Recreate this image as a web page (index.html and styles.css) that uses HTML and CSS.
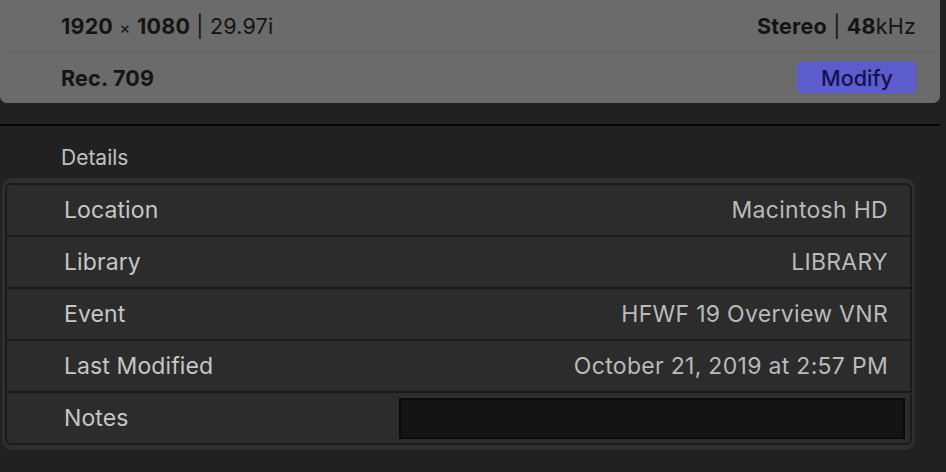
FILE: index.html
```html
<!DOCTYPE html>
<html>
<head>
<meta charset="utf-8">
<link rel="stylesheet" href="styles.css">
</head>
<body>
<div class="summary">
  <div class="sum-row">
    <span class="fmt"><b>1920</b> <span class="times">×</span> <b>1080</b> | 29.97i</span>
    <span class="fmt"><b>Stereo</b> | <b>48</b>kHz</span>
  </div>
  <div class="sum-sep"></div>
  <div class="sum-row">
    <span class="fmt"><b>Rec. 709</b></span>
    <button class="modify">Modify</button>
  </div>
</div>
<div class="rule"></div>
<div class="section-title">Details</div>
<div class="table">
  <div class="rows">
    <div class="row"><span class="label">Location</span><span class="value">Macintosh HD</span></div>
    <div class="row"><span class="label">Library</span><span class="value">LIBRARY</span></div>
    <div class="row"><span class="label">Event</span><span class="value">HFWF 19 Overview VNR</span></div>
    <div class="row"><span class="label">Last Modified</span><span class="value">October 21, 2019 at 2:57 PM</span></div>
    <div class="row"><span class="label">Notes</span><div class="notes"></div></div>
  </div>
</div>
</body>
</html>
```
FILE: styles.css
```css
html, body {
  margin: 0;
  padding: 0;
  background: #212121;
  font-family: "Inter", "Liberation Sans", sans-serif;
  width: 946px;
  height: 472px;
  overflow: hidden;
}
.summary {
  width: 940px;
  height: 103px;
  background: #6b6b6b;
  border-radius: 0 0 7px 7px;
  box-sizing: border-box;
}
.sum-row {
  height: 51px;
  display: flex;
  align-items: center;
  justify-content: space-between;
  padding: 0 24px 0 61px;
}
.sum-row + .sum-sep + .sum-row {
  height: 51px;
  padding-right: 23px;
}
.sum-sep {
  height: 1px;
  background: #606060;
  margin: 0 7px 0 8px;
}
.fmt {
  font-size: 21.5px;
  color: #141414;
  font-weight: 400;
  letter-spacing: 0.2px;
}
.fmt b {
  font-weight: 700;
}
.times {
  font-size: 17px;
}
.modify {
  width: 120px;
  height: 32px;
  border: none;
  border-radius: 6px;
  background: #5c5ccd;
  color: #12124e;
  font-family: inherit;
  font-size: 21.5px;
  font-weight: 500;
  padding: 0;
}
.rule {
  width: 940px;
  height: 2px;
  margin-top: 21px;
  background: #050505;
}
.section-title {
  padding: 18px 0 0 61px;
  height: 52px;
  line-height: 28px;
  font-size: 21px;
  color: #c0c0c0;
  box-sizing: border-box;
}
.table {
  margin-left: 2px;
  width: 913px;
  box-sizing: border-box;
  background: #2f2f2f;
  border-radius: 10px;
  padding: 5px 3px 5px 3px;
}
.rows {
  border: 2px solid #1b1b1b;
  border-radius: 6px;
  background: #2c2c2c;
  overflow: hidden;
}
.row {
  height: 50px;
  display: flex;
  align-items: center;
  justify-content: space-between;
  padding: 0 22px 0 57px;
}
.row + .row {
  border-top: 2px solid #1b1b1b;
}
.label {
  font-size: 23px;
  color: #c6c6c6;
  letter-spacing: 0.1px;
}
.value {
  font-size: 23px;
  color: #bababa;
  letter-spacing: 0.3px;
}
.row:last-child {
  padding-right: 5px;
}
.notes {
  width: 502px;
  height: 37px;
  background: #141414;
  border: 2px solid #0b0b0b;
}
```
